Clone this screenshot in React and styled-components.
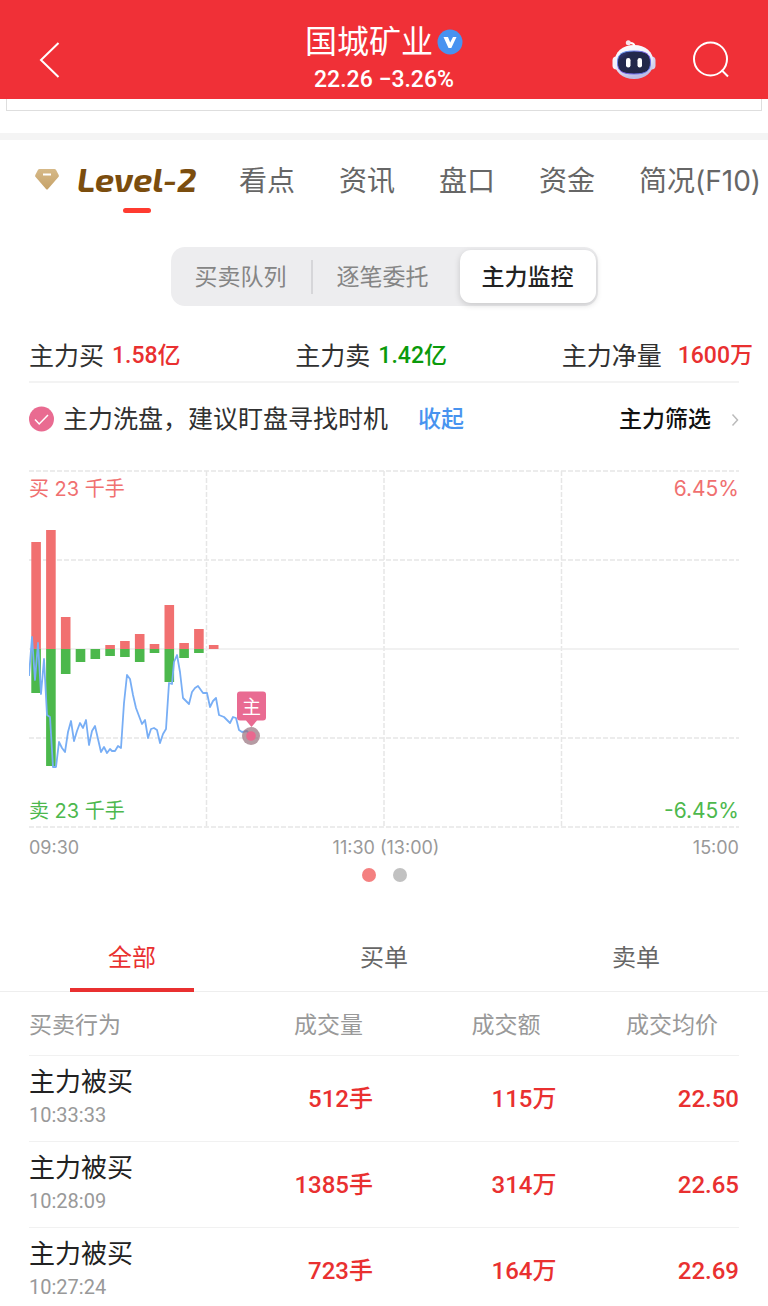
import React, { useState } from "react";
import styled, { createGlobalStyle } from "styled-components";

const sans = `"Inter", "Noto Sans CJK SC", sans-serif`;
const digits = `"Roboto", "Noto Sans CJK SC", sans-serif`;
const red = "#e93030";

const GlobalStyle = createGlobalStyle`
  * { box-sizing: border-box; }
  body { margin: 0; background: #fff; color: #303030; font-family: ${sans}; line-height: 1.2; }
  button { margin: 0; padding: 0; border: 0; background: none; color: inherit; font: inherit; cursor: pointer; white-space: nowrap; }
  svg { display: block; flex: none; }
`;

const Screen = styled.div`
  display: flex;
  flex-direction: column;
  height: 100vh;
`;

const Header = styled.header`
  flex: none;
  display: grid;
  grid-template-columns: 1fr auto 1fr;
  align-items: center;
  height: 99px;
  padding: 20px 39px 0;
  background: #f03037;
  color: #fff;
`;

const TitleBlock = styled.div`
  display: flex;
  flex-direction: column;
  align-items: center;
  padding-bottom: 2px;
`;

const Title = styled.h1`
  display: flex;
  align-items: center;
  gap: 4px;
  margin: 0;
  font-size: 32px;
  font-weight: 400;
  line-height: 42px;
`;

const Quote = styled.div`
  font: 500 23px/34px ${digits};
`;

const HeaderActions = styled.div`
  display: flex;
  justify-content: flex-end;
  align-items: center;
  gap: 37px;
`;

const Content = styled.main`
  flex: 1;
  min-height: 0;
  overflow-y: auto;
  scrollbar-width: none;
`;

const PanelEdge = styled.div`
  height: 12px;
  margin: 0 6px 22px;
  border: 1px solid #dedede;
  border-top: 0;
`;

const Band = styled.div`
  height: 7px;
  background: #f4f4f4;
`;

const SectionTabs = styled.nav`
  display: flex;
  align-items: center;
  gap: 44px;
  height: 80px;
  padding-left: 34px;
  overflow: hidden;
`;

const SectionTab = styled.button`
  height: 80px;
  padding-top: 4px;
  color: #666;
  font-size: 28px;
`;

const LevelTab = styled.button`
  position: relative;
  flex: none;
  display: flex;
  align-items: center;
  gap: 17px;
  width: 161px;
  height: 80px;
  padding-bottom: 2px;
  color: #7b4d0e;
  font: italic 700 34px/40px "Exo 2", "Roboto", sans-serif;

  &::after {
    content: "";
    position: absolute;
    bottom: 7px;
    left: 89px;
    width: 28px;
    height: 5px;
    border-radius: 3px;
    background: #ff3b30;
  }
`;

const Segments = styled.div`
  display: flex;
  align-items: center;
  width: 427px;
  max-width: 100%;
  height: 59px;
  margin: 27px auto 0;
  padding-right: 2px;
  border-radius: 14px;
  background: #ededef;
`;

const Segment = styled.button`
  width: 140px;
  height: 53px;
  padding-top: 3px;
  border-radius: 11px;
  color: ${(p) => (p.$active ? "#222" : "#858585")};
  background: ${(p) => (p.$active ? "#fff" : "transparent")};
  box-shadow: ${(p) => (p.$active ? "0 2px 6px rgba(0, 0, 0, 0.16)" : "none")};
  font-size: 23px;
  font-weight: ${(p) => (p.$active ? 500 : 400)};

  &:last-child {
    width: 136px;
    margin-left: auto;
  }
`;

const SegmentRule = styled.span`
  width: 2px;
  height: 34px;
  background: #d6d6d9;
`;

const Stats = styled.dl`
  display: flex;
  justify-content: space-between;
  margin: 24px 15px 0 29px;
`;

const Stat = styled.div`
  display: flex;
  align-items: center;
  gap: ${(p) => (p.$wide ? 16 : 8)}px;
  height: 51px;
  white-space: nowrap;
`;

const StatName = styled.dt`
  font-size: 25px;
`;

const StatValue = styled.dd`
  margin: 0;
  color: ${(p) => p.$color};
  font: 500 23px/36px ${digits};
`;

const Advice = styled.section`
  display: flex;
  align-items: center;
  height: 73px;
  margin: 0 29px 16px;
  border-top: 2px solid #f3f3f3;
`;

const AdviceText = styled.span`
  margin-left: 9px;
  font-size: 25px;
  white-space: nowrap;
`;

const FoldButton = styled.button`
  margin-left: 30px;
  padding-top: 2px;
  color: #4893ef;
  font-size: 23px;
  font-weight: 500;
`;

const FilterButton = styled.button`
  display: flex;
  align-items: center;
  gap: 20px;
  margin-left: auto;
  padding-top: 2px;
  color: #111;
  font-size: 23px;
  font-weight: 500;
`;

const ChartBox = styled.section`
  position: relative;
  margin: 0 29px;
`;

const ChartSvg = styled.svg`
  width: 100%;
  height: auto;
`;

const ChartLegend = styled.div`
  position: absolute;
  left: 0;
  right: 0;
  ${(p) => (p.$side === "buy" ? "top: 4px" : "bottom: 2px")};
  display: flex;
  justify-content: space-between;
  color: ${(p) => (p.$side === "buy" ? "#f07070" : "#4db84d")};
  font-size: 21px;
  line-height: 30px;
`;

const Lots = styled.span`
  font-size: 20px;
`;

const TimeAxis = styled.div`
  display: flex;
  justify-content: space-between;
  margin: 0 29px;
  color: #999;
  font-size: 18px;
  line-height: 40px;
`;

const Pager = styled.div`
  display: flex;
  justify-content: center;
  gap: 17px;
  padding-bottom: 40px;
`;

const PageDot = styled.button`
  width: 14px;
  height: 14px;
  border-radius: 50%;
  background: ${(p) => (p.$active ? "#f48080" : "#c1c1c1")};
`;

const OrderTabs = styled.div`
  display: flex;
  height: 70px;
  padding: 0 6px;
  box-shadow: inset 0 -1px #eee;
`;

const OrderTab = styled.button`
  flex: 1;
  position: relative;
  padding-top: 3px;
  color: ${(p) => (p.$active ? red : "#666")};
  font-size: 24px;

  &::after {
    content: "";
    display: ${(p) => (p.$active ? "block" : "none")};
    position: absolute;
    bottom: 0;
    left: 50%;
    width: 124px;
    height: 4px;
    margin-left: -62px;
    background: ${red};
  }
`;

const TableWrap = styled.div`
  margin: 0 29px;
`;

const OrderTable = styled.table`
  width: 100%;
  table-layout: fixed;
  border-spacing: 0;
`;

const HeadCell = styled.th`
  height: 64px;
  padding: 4px 21px 0 0;
  border-bottom: 1px solid #f1f1f1;
  color: #999;
  font-size: 23px;
  font-weight: 400;
  text-align: right;
  white-space: nowrap;

  &:first-child {
    padding-right: 0;
    text-align: left;
  }
`;

const ActionCell = styled.td`
  height: 86px;
  padding: 8px 0 0;
  border-bottom: 1px solid #f1f1f1;
  vertical-align: top;
`;

const ActionName = styled.div`
  color: #222;
  font-size: 26px;
  line-height: 36px;
`;

const ActionTime = styled.time`
  display: block;
  color: #999;
  font: 400 20px/30px ${digits};
`;

const NumberCell = styled.td`
  padding: 0 ${(p) => p.$inset}px 0 0;
  border-bottom: 1px solid #f1f1f1;
  color: ${red};
  font: 500 24px/36px ${digits};
  text-align: right;
`;

const VerifiedIcon = () => (
  <svg width="26" height="26" viewBox="0 0 26 26" aria-hidden="true">
    <circle cx="13" cy="13" r="12.5" fill="#4892f0" />
    <path d="M6.5 8H11l2.2 5.6L16 8h3.5l-5.2 11h-2.8z" fill="#fff" />
  </svg>
);

const RobotIcon = () => (
  <svg width="44" height="40" viewBox="0 0 44 40" aria-hidden="true">
    <defs>
      <linearGradient id="shell" x1="0" y1="0" x2="0.3" y2="1">
        <stop offset="0" stopColor="#fff" />
        <stop offset="0.6" stopColor="#eeedfa" />
        <stop offset="1" stopColor="#bdbde4" />
      </linearGradient>
      <linearGradient id="visor" x1="0" y1="0" x2="1" y2="1">
        <stop offset="0" stopColor="#3c3f96" />
        <stop offset="0.25" stopColor="#23284d" />
        <stop offset="1" stopColor="#222746" />
      </linearGradient>
      <linearGradient id="rim" x1="0" y1="0" x2="1" y2="1">
        <stop offset="0" stopColor="#57a9f2" />
        <stop offset="0.5" stopColor="#7b52e8" />
        <stop offset="1" stopColor="#5b83ef" />
      </linearGradient>
    </defs>
    <path d="M17 3q5-.6 5.5 3" fill="none" stroke="#fff" strokeWidth="2" />
    <circle cx="16.3" cy="2.8" r="2.5" fill="#f8e4ec" />
    <rect x="0.5" y="16.500" width="8" height="13" rx="4" fill="#f3f1fc" />
    <rect x="35.5" y="16.500" width="8" height="13" rx="4" fill="#d2d2ef" />
    <path d="M22 5C33.500 5 41.500 12 41.500 22S33.500 39 22 39 2.500 32 2.500 22 10.500 5 22 5z" fill="url(#shell)" />
    <path d="M22 11C34 11 38.500 14 38.500 22.500S34 34 22 34 5.500 31 5.500 22.500 10 11 22 11z" fill="url(#visor)" stroke="url(#rim)" strokeWidth="1" />
    <rect x="14" y="18" width="4.500" height="9.500" rx="2.200" fill="#fff" />
    <rect x="25.500" y="18" width="4.500" height="9.500" rx="2.200" fill="#fff" />
  </svg>
);

const bars = [
  [107, 44], [119, 117], [32, 25], [0, 13], [0, 10], [4, 7], [8, 8],
  [15, 13], [5, 4], [44, 33], [6, 9], [20, 4], [4, 0],
];

const priceLine =
  "0,206 3,167 6,210 9,173 12,224 15,189 18,245 21,247 24,297 27,297 30,272 33,278 36,282 39,262 42,251 45,271 48,261 51,253 54,258 57,250 60,275 63,261 66,256 69,269 72,282 75,277 78,283 81,279 83,281 86,281 89,276 92,278 95,233 98,205 101,209 104,225 107,238 113,254 116,250 119,268 122,259 125,258 128,260 131,273 134,264 137,259 140,213 143,214 145,192 148,185 151,202 154,228 160,234 163,222 166,218 169,216 174,223 178,223 181,237 184,231 187,228 190,245 195,247 201,253 204,247 207,248 210,260 213,262 218,261 222,266";

const FlowChart = () => (
  <ChartSvg viewBox="0 0 710 358" role="img" aria-label="主力监控">
    <g stroke="#e6e6e6" strokeWidth="1.500" strokeDasharray="5 2">
      {[1, 90, 268, 357].map((y) => (
        <line key={y} x1="0" x2="710" y1={y} y2={y} />
      ))}
      {[177.5, 355, 532.5].map((x) => (
        <line key={x} x1={x} x2={x} y1="1" y2="357" />
      ))}
    </g>
    <line x1="0" x2="710" y1="179" y2="179" stroke="#ececec" strokeWidth="1.500" />
    {bars.map(([buy, sell], i) => (
      <g key={i}>
        <rect x={2.3 + i * 14.8} y={179 - buy} width="9.600" height={buy} fill="#f17070" />
        <rect x={2.3 + i * 14.8} y="179" width="9.600" height={sell} fill="#4cb84c" />
      </g>
    ))}
    <polyline points={priceLine} fill="none" stroke="#78aef5" strokeWidth="1.800" strokeLinejoin="round" />
    <circle cx="222" cy="266" r="9" fill="#96707c" fillOpacity="0.700" />
    <circle cx="222" cy="266" r="4.800" fill="#e9688f" />
    <path d="M211 221.500h23a3 3 0 0 1 3 3v23a3 3 0 0 1-3 3h-6l-5.500 6.500-5.500-6.500h-6a3 3 0 0 1-3-3v-23a3 3 0 0 1 3-3z" fill="#e96b92" />
    <text x="222.500" y="244" textAnchor="middle" fill="#fff" fontSize="19" fontFamily="Noto Sans CJK SC, sans-serif">主</text>
  </ChartSvg>
);

const stats = [
  { name: "主力买", value: "1.58亿", color: red },
  { name: "主力卖", value: "1.42亿", color: "#0b9a0b" },
  { name: "主力净量", value: "1600万", color: red, wide: true },
];

const orders = [
  { time: "10:33:33", volume: "512手", amount: "115万", price: "22.50" },
  { time: "10:28:09", volume: "1385手", amount: "314万", price: "22.65" },
  { time: "10:27:24", volume: "723手", amount: "164万", price: "22.69" },
];

export default function App() {
  const [segment, setSegment] = useState("主力监控");
  const [side, setSide] = useState("全部");
  const [page, setPage] = useState(0);

  return (
    <Screen>
      <GlobalStyle />
      <Header>
        <button aria-label="返回">
          <svg width="22" height="36" viewBox="0 0 22 36" aria-hidden="true">
            <path d="M19.500 1L2 18l17.500 17" fill="none" stroke="#fff" strokeWidth="2" />
          </svg>
        </button>
        <TitleBlock>
          <Title>国城矿业<VerifiedIcon /></Title>
          <Quote>22.26 −3.26%</Quote>
        </TitleBlock>
        <HeaderActions>
          <button aria-label="智能助手"><RobotIcon /></button>
          <button aria-label="搜索">
            <svg width="36" height="38" viewBox="0 0 36 38" aria-hidden="true">
              <g fill="none" stroke="#fff" strokeWidth="2">
                <circle cx="17.500" cy="18" r="16.500" />
                <path d="M28.500 29l6.500 6.500" />
              </g>
            </svg>
          </button>
        </HeaderActions>
      </Header>

      <Content>
        <PanelEdge />
        <Band />
        <SectionTabs>
          <LevelTab>
            <svg width="26" height="24" viewBox="0 0 26 24" aria-hidden="true">
              <defs>
                <linearGradient id="gem" x1="0" y1="0" x2="0" y2="1">
                  <stop offset="0" stopColor="#d6b988" />
                  <stop offset="1" stopColor="#c6a268" />
                </linearGradient>
              </defs>
              <path d="M5.500 2h15q1 0 1.600.9l2.600 5q.6 1.200-.3 2.200L14 22q-1 1-2 0L1.600 10.100q-.9-1-.3-2.200l2.600-5Q4.500 2 5.500 2z" fill="url(#gem)" />
              <path d="M9 7.500h8" stroke="#fff" strokeWidth="2" />
            </svg>
            Level-2
          </LevelTab>
          {["看点", "资讯", "盘口", "资金", "简况(F10)"].map((name) => (
            <SectionTab key={name}>{name}</SectionTab>
          ))}
        </SectionTabs>

        <Segments>
          {["买卖队列", "逐笔委托", "主力监控"].map((name, i) => (
            <React.Fragment key={name}>
              {i === 1 && <SegmentRule />}
              <Segment $active={segment === name} onClick={() => setSegment(name)}>{name}</Segment>
            </React.Fragment>
          ))}
        </Segments>

        <Stats>
          {stats.map((s) => (
            <Stat key={s.name} $wide={s.wide}>
              <StatName>{s.name}</StatName>
              <StatValue $color={s.color}>{s.value}</StatValue>
            </Stat>
          ))}
        </Stats>

        <Advice>
          <svg width="25" height="26" viewBox="0 0 25 26" aria-hidden="true">
            <circle cx="12.500" cy="13" r="12.500" fill="#e96b91" />
            <path d="M6 13.500l4.200 4.500L19 9" fill="none" stroke="#fff" strokeWidth="1.500" />
          </svg>
          <AdviceText>主力洗盘，建议盯盘寻找时机</AdviceText>
          <FoldButton>收起</FoldButton>
          <FilterButton>
            主力筛选
            <svg width="8" height="14" viewBox="0 0 8 14" aria-hidden="true">
              <path d="M1.500 1.500L6.500 7l-5 5.500" fill="none" stroke="#bbb" strokeWidth="1.500" />
            </svg>
          </FilterButton>
        </Advice>

        <ChartBox>
          <FlowChart />
          <ChartLegend $side="buy"><Lots>买 23 千手</Lots><span>6.45%</span></ChartLegend>
          <ChartLegend $side="sell"><Lots>卖 23 千手</Lots><span>-6.45%</span></ChartLegend>
        </ChartBox>
        <TimeAxis>
          <span>09:30</span>
          <span>11:30 (13:00)</span>
          <span>15:00</span>
        </TimeAxis>
        <Pager>
          {[0, 1].map((n) => (
            <PageDot key={n} aria-label={`第${n + 1}页`} $active={page === n} onClick={() => setPage(n)} />
          ))}
        </Pager>

        <OrderTabs>
          {["全部", "买单", "卖单"].map((name) => (
            <OrderTab key={name} $active={side === name} onClick={() => setSide(name)}>{name}</OrderTab>
          ))}
        </OrderTabs>
        <TableWrap>
          <OrderTable>
            <thead>
              <tr>
                {["买卖行为", "成交量", "成交额", "成交均价"].map((name) => (
                  <HeadCell key={name} scope="col">{name}</HeadCell>
                ))}
              </tr>
            </thead>
            <tbody>
              {orders.map((o) => (
                <tr key={o.time}>
                  <ActionCell>
                    <ActionName>主力被买</ActionName>
                    <ActionTime>{o.time}</ActionTime>
                  </ActionCell>
                  <NumberCell $inset={11}>{o.volume}</NumberCell>
                  <NumberCell $inset={5}>{o.amount}</NumberCell>
                  <NumberCell $inset={0}>{o.price}</NumberCell>
                </tr>
              ))}
            </tbody>
          </OrderTable>
        </TableWrap>
      </Content>
    </Screen>
  );
}
